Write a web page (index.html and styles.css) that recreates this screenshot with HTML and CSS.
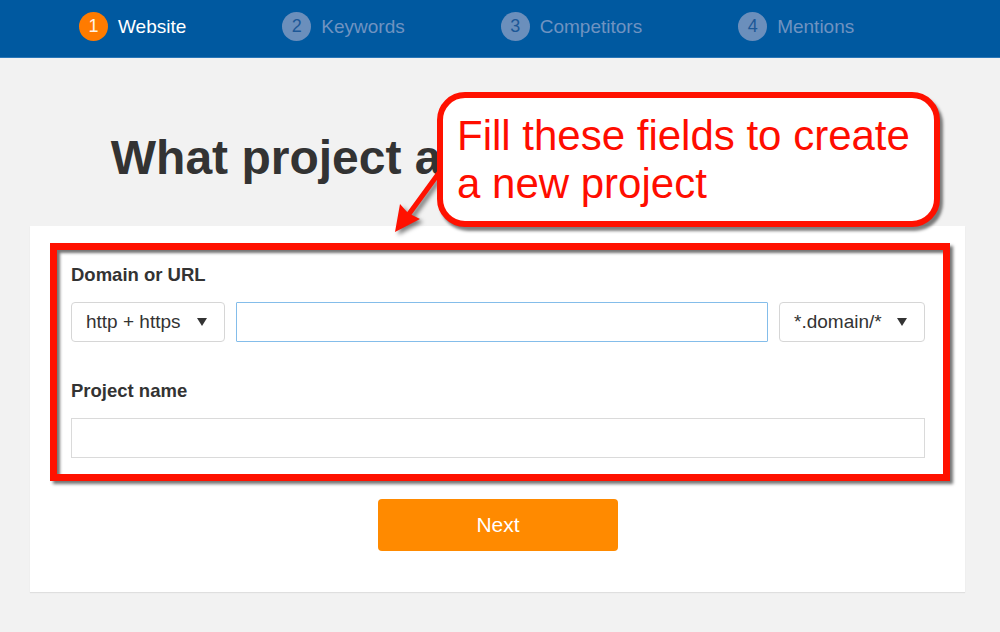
FILE: index.html
```html
<!DOCTYPE html>
<html lang="en">
<head>
<meta charset="utf-8">
<title>New project</title>
<link rel="stylesheet" href="styles.css">
</head>
<body>
  <header class="topbar">
    <div class="step active"><span class="step-num">1</span><span class="step-label">Website</span></div>
    <div class="step"><span class="step-num">2</span><span class="step-label">Keywords</span></div>
    <div class="step"><span class="step-num">3</span><span class="step-label">Competitors</span></div>
    <div class="step"><span class="step-num">4</span><span class="step-label">Mentions</span></div>
  </header>

  <h1 class="heading">What project are you working on?</h1>

  <section class="card">
    <div class="field">
      <label class="label">Domain or URL</label>
      <div class="row">
        <div class="select select-protocol"><span>http + https</span><svg class="caret" width="10" height="8" viewBox="0 0 10 8"><polygon points="0,0 10,0 5,8"/></svg></div>
        <input class="url-input" type="text">
        <div class="select select-mode"><span>*.domain/*</span><svg class="caret" width="10" height="8" viewBox="0 0 10 8"><polygon points="0,0 10,0 5,8"/></svg></div>
      </div>
    </div>
    <div class="field">
      <label class="label">Project name</label>
      <input class="name-input" type="text">
    </div>
    <div class="btn-row">
      <button class="next" type="button">Next</button>
    </div>
  </section>

  <div class="mark-box"></div>
  <svg class="arrow" width="80" height="100" viewBox="0 0 80 100">
    <line x1="72" y1="5" x2="29" y2="64" stroke="#ff1100" stroke-width="5" stroke-linecap="round"/>
    <polygon points="15,82 20,54 28,63 40,69" fill="#ff1100"/>
  </svg>
  <div class="callout">Fill these fields to create<br>a new project</div>
</body>
</html>
```

FILE: styles.css
```css
html, body {
  margin: 0;
  padding: 0;
}

body {
  position: relative;
  width: 1000px;
  height: 632px;
  overflow: hidden;
  background: #f2f2f2;
  font-family: "Liberation Sans", Arial, sans-serif;
}

/* top stepper */
.topbar {
  height: 58px;
  box-sizing: border-box;
  background: #0059a0;
  border-bottom: 1px solid #2a77b8;
  padding: 0 0 4px 79px;
  display: flex;
  align-items: center;
  gap: 96px;
}

.step {
  display: flex;
  align-items: center;
  gap: 10px;
  font-size: 19px;
  color: #6f93c1;
}

.step-num {
  width: 29px;
  height: 29px;
  border-radius: 50%;
  background: #6b8fbc;
  color: #1d5897;
  font-size: 18px;
  line-height: 29px;
  text-align: center;
}

.step.active {
  color: #ffffff;
}

.step.active .step-num {
  background: #ff7b00;
  color: #fff3e6;
}

/* heading */
.heading {
  margin: 72px 0 0 30px;
  width: 935px;
  height: 55px;
  text-align: center;
  font-size: 48px;
  line-height: 55px;
  font-weight: 700;
  color: #333333;
  white-space: nowrap;
}

/* card */
.card {
  margin: 41px 0 0 30px;
  width: 935px;
  box-sizing: border-box;
  background: #ffffff;
  padding: 38px 40px 41px 41px;
  box-shadow: 0 1px 1px rgba(0, 0, 0, 0.08);
}

.field + .field {
  margin-top: 38px;
}

.label {
  display: block;
  font-size: 18.5px;
  line-height: 21px;
  font-weight: 700;
  color: #333333;
  margin-bottom: 17px;
}

.row {
  display: flex;
  gap: 11px;
  height: 40px;
}

.select {
  box-sizing: border-box;
  height: 40px;
  border: 1px solid #d6d6d6;
  border-radius: 4px;
  background: #ffffff;
  display: flex;
  align-items: center;
  justify-content: space-between;
  padding: 0 17px 0 14px;
  font-size: 19px;
  color: #333333;
}

.select-protocol {
  width: 154px;
}

.select-mode {
  width: 146px;
}

.caret {
  display: block;
  fill: #333333;
}

.url-input {
  flex: 1;
  min-width: 0;
  height: 40px;
  box-sizing: border-box;
  margin: 0;
  border: 1px solid #84bdea;
  border-radius: 1px;
  background: #ffffff;
  outline: none;
}

.name-input {
  display: block;
  width: 100%;
  height: 40px;
  box-sizing: border-box;
  margin: 0;
  border: 1px solid #dadada;
  background: #ffffff;
  outline: none;
}

.btn-row {
  margin-top: 41px;
  display: flex;
  justify-content: center;
}

.next {
  width: 240px;
  height: 52px;
  border: 0;
  border-radius: 4px;
  background: #ff8a00;
  color: #ffffff;
  font-family: "Liberation Sans", Arial, sans-serif;
  font-size: 21px;
  padding: 0;
}

/* annotations overlay */
.mark-box {
  position: absolute;
  left: 50px;
  top: 243px;
  width: 900px;
  height: 238px;
  box-sizing: border-box;
  border: 7px solid #ff1100;
  box-shadow: 3px 3px 3px rgba(0, 0, 0, 0.55), inset 3px 3px 3px rgba(0, 0, 0, 0.55);
}

.arrow {
  position: absolute;
  left: 380px;
  top: 150px;
  filter: drop-shadow(3px 3px 2px rgba(0, 0, 0, 0.5));
}

.callout {
  position: absolute;
  left: 437px;
  top: 92px;
  width: 503px;
  height: 135px;
  box-sizing: border-box;
  border: 6px solid #ff1100;
  border-radius: 28px;
  background: #ffffff;
  box-shadow: 3px 4px 3px rgba(0, 0, 0, 0.5);
  padding: 14px;
  font-size: 42px;
  line-height: 48px;
  color: #ff0d00;
  white-space: nowrap;
}
```
